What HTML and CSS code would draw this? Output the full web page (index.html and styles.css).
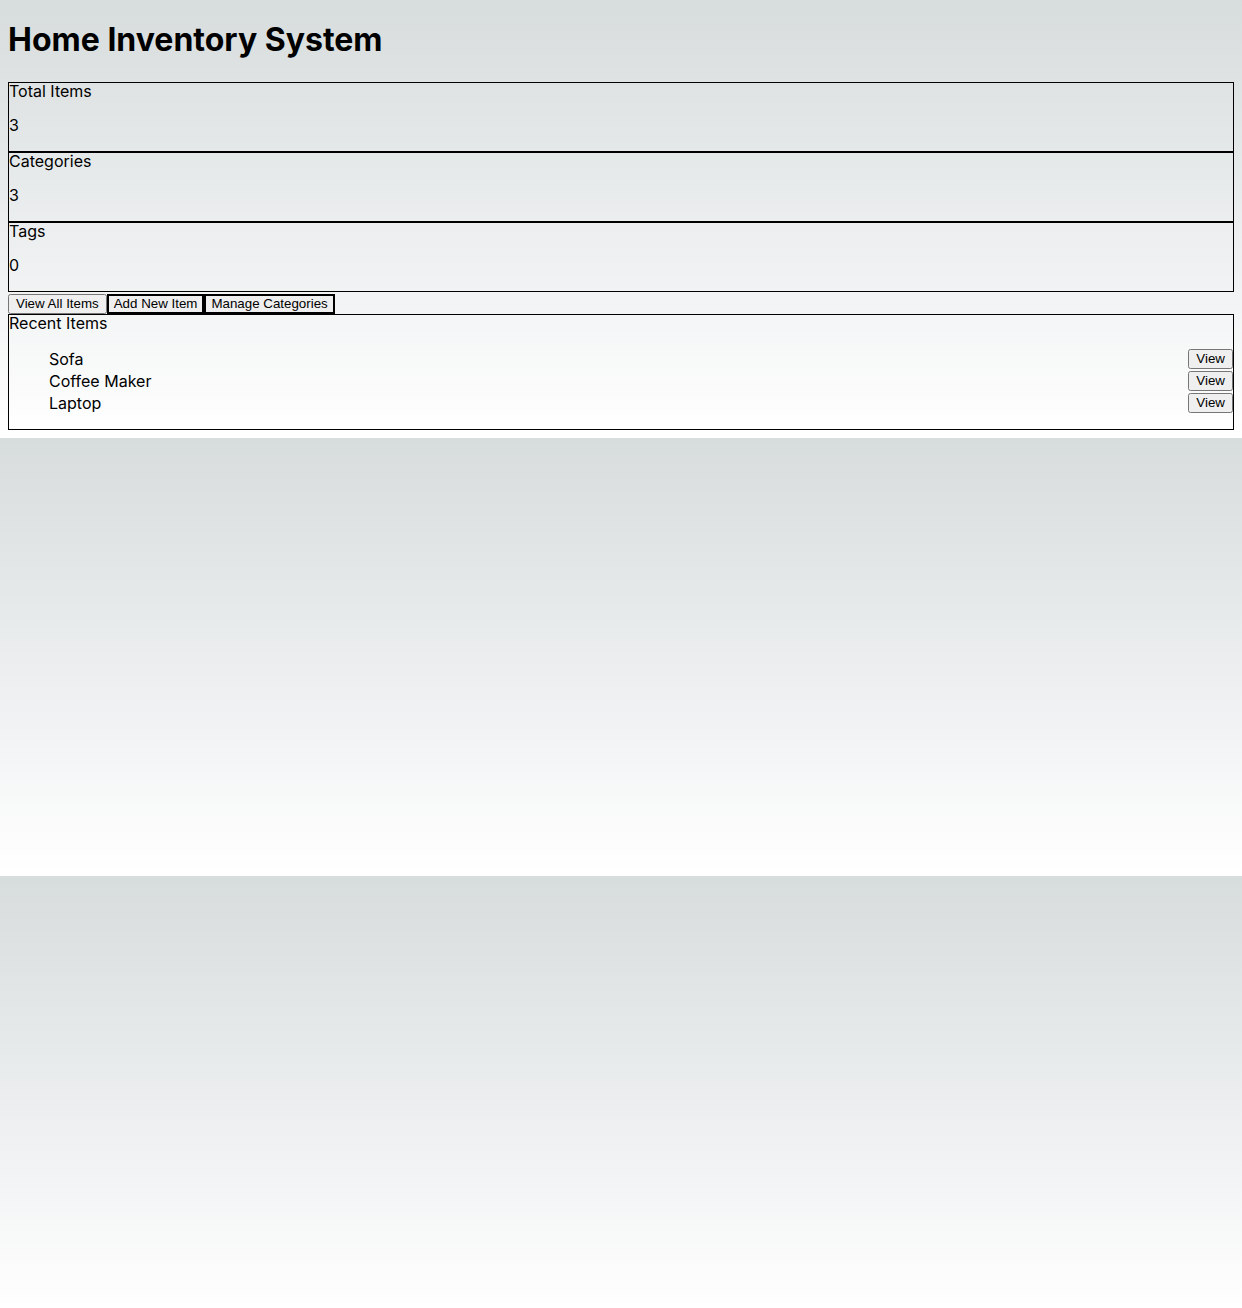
FILE: index.html
```html
<!DOCTYPE html>
<html>
<head>
<meta charset="utf-8">
<title>Home Inventory System</title>
<link rel="stylesheet" href="styles.css">
</head>
<body>
<h1 class="title">Home Inventory System</h1>
<div class="stats">
  <div class="stat">
    <div class="stat-label">Total Items</div>
    <p class="stat-value">3</p>
  </div>
  <div class="stat">
    <div class="stat-label">Categories</div>
    <p class="stat-value">3</p>
  </div>
  <div class="stat">
    <div class="stat-label">Tags</div>
    <p class="stat-value">0</p>
  </div>
</div>
<div class="actions">
  <button class="btn">View All Items</button><button class="btn tab">Add New Item</button><button class="btn tab">Manage Categories</button>
</div>
<div class="recent">
  <div class="recent-title">Recent Items</div>
  <ul class="recent-list">
    <li class="recent-item"><span>Sofa</span><button class="btn">View</button></li>
    <li class="recent-item"><span>Coffee Maker</span><button class="btn">View</button></li>
    <li class="recent-item"><span>Laptop</span><button class="btn">View</button></li>
  </ul>
</div>
</body>
</html>
```
FILE: styles.css
```css
body {
  margin: 8px;
  font-family: Inter, "Noto Sans", sans-serif;
  font-size: 16px;
  color: #000;
  background: linear-gradient(#d7dcdd, #ffffff);
}
.title {
  font-size: 32px;
  font-weight: 700;
  margin: 13.44px 0 21.44px;
  line-height: 38.7px;
}
.stat {
  border: 1px solid #000;
}
.stat-label {
  line-height: 17px;
}
.stat-value {
  margin: 16px 0 17px;
  line-height: 18px;
}
.actions {
  padding-top: 2px;
  display: flex;
}
.btn {
  font-family: Arial, "Liberation Sans", sans-serif;
  font-size: 13.33px;
  line-height: normal;
  height: 20px;
  box-sizing: border-box;
  padding: 0 6px;
}
.tab {
  background: #efefef;
  border: 2px solid #000;
  border-radius: 0;
  padding: 0 5px;
}
.recent {
  border: 1px solid #000;
}
.recent-title {
  line-height: 17px;
}
.recent-list {
  margin: 16px 0 15px;
  padding-left: 40px;
  list-style: none;
}
.recent-item {
  display: flex;
  justify-content: space-between;
  align-items: center;
  height: 22px;
}
```
